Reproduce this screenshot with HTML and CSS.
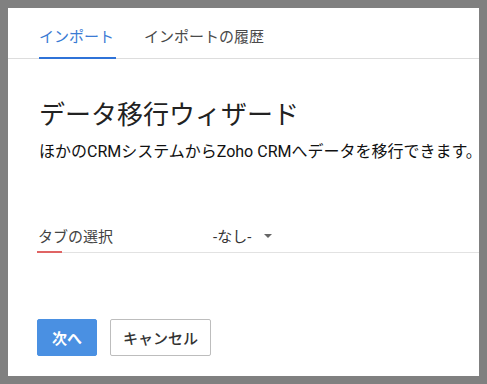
FILE: index.html
```html
<!DOCTYPE html>
<html lang="ja">
<head>
<meta charset="utf-8">
<link rel="stylesheet" href="styles.css">
</head>
<body>
<div class="panel">
  <nav class="tabs">
    <div class="tab active">インポート</div>
    <div class="tab">インポートの履歴</div>
  </nav>
  <section class="content">
    <h1 class="title">データ移行ウィザード</h1>
    <p class="desc">ほかのCRMシステムからZoho CRMへデータを移行できます。</p>
    <div class="field">
      <div class="label">タブの選択</div>
      <div class="select">-なし-<span class="caret"></span></div>
    </div>
    <div class="actions">
      <button class="btn primary">次へ</button>
      <button class="btn secondary">キャンセル</button>
    </div>
  </section>
</div>
</body>
</html>
```
FILE: styles.css
```css
html, body { margin: 0; padding: 0; }
body {
  background: #808080;
  padding: 8px;
  font-family: "Roboto", "Noto Sans CJK JP", sans-serif;
  height: 384px;
  box-sizing: border-box;
}
.panel {
  background: #fff;
  height: 368px;
  box-sizing: border-box;
}
.tabs {
  display: flex;
  align-items: flex-start;
  gap: 28px;
  padding-left: 31px;
  border-bottom: 1px solid #dddddd;
  height: 50px;
}
.tab {
  font-size: 15px;
  color: #4a4a4a;
  padding-top: 18px;
  height: 51px;
  box-sizing: border-box;
  line-height: 22px;
}
.tab.active {
  color: #3b7bd4;
  box-shadow: inset 0 -2px 0 #2f73d8;
  padding-right: 2px;
}
.content {
  padding: 0 0 0 31px;
}
.title {
  margin: 38px 0 0;
  font-size: 26px;
  font-weight: 400;
  color: #222;
  line-height: 36px;
}
.desc {
  margin: 9px 0 0;
  font-size: 16px;
  color: #111;
  line-height: 20px;
  white-space: nowrap;
}
.field {
  margin-top: 58px;
  display: flex;
  align-items: center;
  border-bottom: 1px solid #e2e2e2;
  height: 31px;
  padding-bottom: 1px;
  position: relative;
  margin-left: -2px;
}
.field::after {
  content: "";
  position: absolute;
  left: 0;
  bottom: -1px;
  width: 25px;
  height: 2px;
  background: #e06464;
}
.label {
  width: 175px;
  padding-left: 1px;
  font-size: 15px;
  color: #444;
}
.select {
  font-size: 15px;
  color: #333;
  display: flex;
  align-items: center;
}
.caret {
  margin-left: 13px;
  width: 0;
  height: 0;
  border-left: 4px solid transparent;
  border-right: 4px solid transparent;
  border-top: 4px solid #666;
}
.actions {
  display: flex;
  gap: 13px;
  margin-top: 66px;
  margin-left: -2px;
}
.btn {
  height: 37px;
  font-family: "Roboto", "Noto Sans CJK JP", sans-serif;
  font-size: 15px;
  border-radius: 2px;
  padding: 0;
  cursor: pointer;
}
.btn.primary {
  width: 60px;
  background: #4a90e2;
  border: 1px solid #4a90e2;
  color: #fff;
  font-weight: 700;
}
.btn.secondary {
  width: 101px;
  background: #fff;
  border: 1px solid #bdbdbd;
  color: #333;
  font-weight: 500;
}
```
